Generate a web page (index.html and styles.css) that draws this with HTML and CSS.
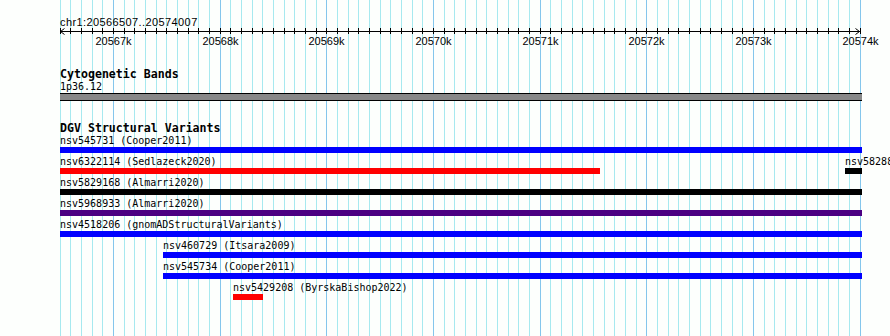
FILE: index.html
```html
<!DOCTYPE html>
<html lang="en">
<head>
  <meta charset="UTF-8">
  <meta name="viewport" content="width=device-width, initial-scale=1.0">
  <link rel="stylesheet" href="styles.css">
  <title>chr1:20566507..20574007</title>
</head>
<body>
  <div class="browser">
    <div class="grid" id="grid"></div>

    <div class="ruler">
      <div class="location">chr1:20566507..20574007</div>
      <svg class="scale" id="scale" width="802" height="7"></svg>
      <div class="scale-labels" id="scale-labels"></div>
    </div>

    <div class="track">
      <h2 class="track-title">Cytogenetic Bands</h2>
      <div class="band-label">1p36.12</div>
      <div class="band"></div>
    </div>

    <div class="track track-dgv">
      <h2 class="track-title">DGV Structural Variants</h2>
      <div class="rows" id="variants"></div>
    </div>
  </div>

  <script>
  const view = { start: 20566507, end: 20574007, left: 60, width: 800 };
  const scale = view.width / (view.end - view.start);
  const trackRight = 862;

  function toX(pos) {
    return view.left + (pos - view.start) * scale;
  }

  // grid lines + ruler ticks, one every 100bp
  const grid = document.getElementById('grid');
  const svg = document.getElementById('scale');
  const labels = document.getElementById('scale-labels');
  const ns = 'http://www.w3.org/2000/svg';
  let svgMarkup = '<line x1="0" y1="3.5" x2="800" y2="3.5" stroke="#000"/>' +
    '<polyline points="4.5,0.5 0.5,3.5 4.5,6.5" fill="none" stroke="#000"/>' +
    '<polyline points="795.5,0.5 799.5,3.5 795.5,6.5" fill="none" stroke="#000"/>';

  for (let pos = 20566500; pos <= 20574000; pos += 100) {
    const x = Math.round(toX(pos) + 0.3);
    const major = pos % 1000 === 0;
    const line = document.createElement('div');
    line.className = major ? 'gridline major' : 'gridline';
    line.style.left = x + 'px';
    grid.appendChild(line);

    const tx = x - view.left + 0.5;
    svgMarkup += '<line x1="' + tx + '" y1="0" x2="' + tx + '" y2="6" stroke="#000"/>';

    if (major) {
      const label = document.createElement('span');
      label.className = 'scale-label';
      label.textContent = (pos / 1000) + 'k';
      label.style.left = (x - view.left + 0.5) + 'px';
      labels.appendChild(label);
    }
  }
  svg.innerHTML = svgMarkup;

  const BLUE = '#0000ff', RED = '#ff0000', BLACK = '#000000', PURPLE = '#4b0082';

  const rows = [
    [{ name: 'nsv545731', study: 'Cooper2011', start: 20480000, end: 20710000, color: BLUE }],
    [
      { name: 'nsv6322114', study: 'Sedlazeck2020', start: 20552000, end: 20571569, color: RED },
      { name: 'nsv5828862', study: 'Almarri2020', start: 20573866, end: 20574150, color: BLACK }
    ],
    [{ name: 'nsv5829168', study: 'Almarri2020', start: 20520000, end: 20590000, color: BLACK }],
    [{ name: 'nsv5968933', study: 'Almarri2020', start: 20530000, end: 20600000, color: PURPLE }],
    [{ name: 'nsv4518206', study: 'gnomADStructuralVariants', start: 20560000, end: 20580000, color: BLUE }],
    [{ name: 'nsv460729', study: 'Itsara2009', start: 20567473, end: 20640000, color: BLUE }],
    [{ name: 'nsv545734', study: 'Cooper2011', start: 20567473, end: 20700000, color: BLUE }],
    [{ name: 'nsv5429208', study: 'ByrskaBishop2022', start: 20568129, end: 20568410, color: RED }]
  ];

  const variants = document.getElementById('variants');
  rows.forEach((row) => {
    const rowEl = document.createElement('div');
    rowEl.className = 'row';
    row.forEach((f) => {
      const left = Math.round(Math.max(toX(f.start), view.left));
      const right = Math.round(Math.min(toX(f.end), trackRight));
      const feature = document.createElement('div');
      feature.className = 'feature';
      feature.style.left = (left - view.left) + 'px';
      feature.innerHTML = '<div class="feature-label">' + f.name + ' (' + f.study + ')</div>' +
        '<div class="feature-bar" style="width:' + (right - left) + 'px;background:' + f.color + '"></div>';
      rowEl.appendChild(feature);
    });
    variants.appendChild(rowEl);
  });
  </script>
</body>
</html>
```

FILE: styles.css
```css
body {
  margin: 0;
  background-color: #fdfffd;
  font-family: 'DejaVu Sans Mono', monospace;
  color: #000;
  overflow: hidden;
}

.browser {
  position: relative;
  width: 890px;
  height: 336px;
  overflow: hidden;
}

.grid {
  position: absolute;
  top: 0;
  left: 0;
  right: 0;
  bottom: 0;
}

.gridline {
  position: absolute;
  top: 0;
  bottom: 0;
  width: 1px;
  background-color: #a6e9ef;
}

.gridline.major {
  background-color: #84c6ec;
}

.ruler,
.track {
  position: relative;
  padding-left: 60px;
}

.ruler {
  height: 67px;
}

.location {
  padding-top: 16px;
  font: 11px/12px 'Liberation Sans', Arial, sans-serif;
  letter-spacing: 0.4px;
}

.scale {
  display: block;
  margin-top: 0;
}

.scale-labels {
  position: relative;
  height: 12px;
}

.scale-label {
  position: absolute;
  top: 0;
  transform: translateX(-50%);
  font: 11px/12px 'Liberation Sans', Arial, sans-serif;
  white-space: nowrap;
}

.track-title {
  margin: 0;
  font: bold 11.6px/14px 'DejaVu Sans Mono', monospace;
}

.band-label {
  font-size: 10px;
  line-height: 12px;
}

.band {
  width: 802px;
  height: 6px;
  background-color: #888888;
  border-top: 1px solid #000;
  border-bottom: 1px solid #000;
}

.track-dgv {
  margin-top: 20px;
}

.row {
  position: relative;
  height: 21px;
}

.feature {
  position: absolute;
  top: 0;
}

.feature-label {
  font-size: 10px;
  line-height: 12px;
  white-space: nowrap;
}

.feature-bar {
  height: 6px;
}
```
